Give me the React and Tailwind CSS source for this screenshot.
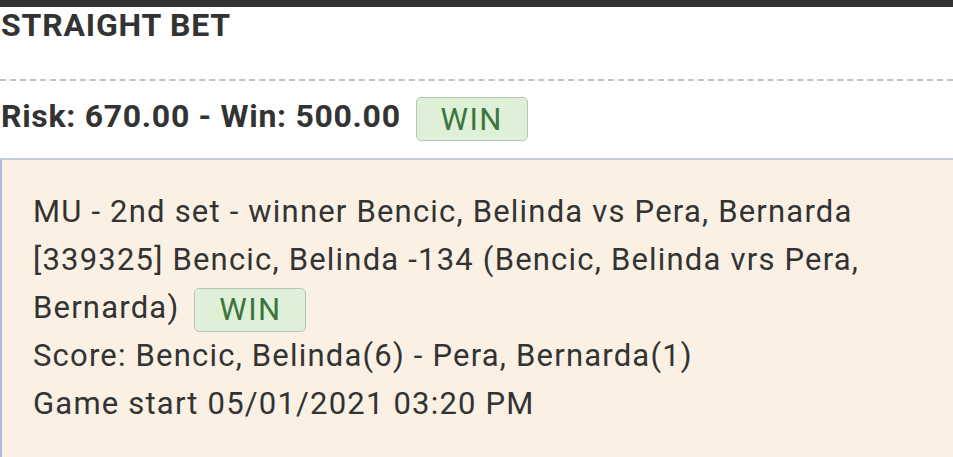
import React from "react";

function Badge() {
  return (
    <span className="inline-flex h-[44px] w-[112px] items-center justify-center rounded-[5px] border border-[#b9c4b5] bg-[#dff0d8] align-middle text-[31px] font-normal leading-none tracking-[1.5px] text-[#3c763d]">
      WIN
    </span>
  );
}

export default function App() {
  return (
    <div className="h-[457px] w-full overflow-hidden bg-white text-[#333333]" style={{ fontFamily: "Roboto, 'Noto Sans', sans-serif" }}>
      <div className="h-[7px] bg-[#333333]" />
      <div className="border-b-2 border-dashed border-[#c2c2c2] pb-[36px] pl-[1px]">
        <div className="text-[32px] font-bold leading-[36px] tracking-[0.8px]">STRAIGHT BET</div>
      </div>
      <div className="flex items-center pl-[1px] pt-[16px]">
        <span className="mb-[6px] text-[32px] font-bold leading-[38px] tracking-[0.7px]">Risk: 670.00 - Win: 500.00</span>
        <span className="ml-[15px]">
          <Badge />
        </span>
      </div>
      <div className="mt-[17px] border-l-2 border-t-2 border-l-[#a9bde6] border-t-[#c6ccd8] bg-[#faf0e4] pb-[40px] pl-[31px] pr-[20px] pt-[28px] text-[31px] leading-[48px] tracking-[1.2px] text-[#333333]">
        <div>MU - 2nd set - winner Bencic, Belinda vs Pera, Bernarda</div>
        <div>
          [339325] Bencic, Belinda -134 (Bencic, Belinda vrs Pera, Bernarda)
          <span className="ml-[15px]"><Badge /></span>
        </div>
        <div>Score: Bencic, Belinda(6) - Pera, Bernarda(1)</div>
        <div>Game start 05/01/2021 03:20 PM</div>
      </div>
    </div>
  );
}
